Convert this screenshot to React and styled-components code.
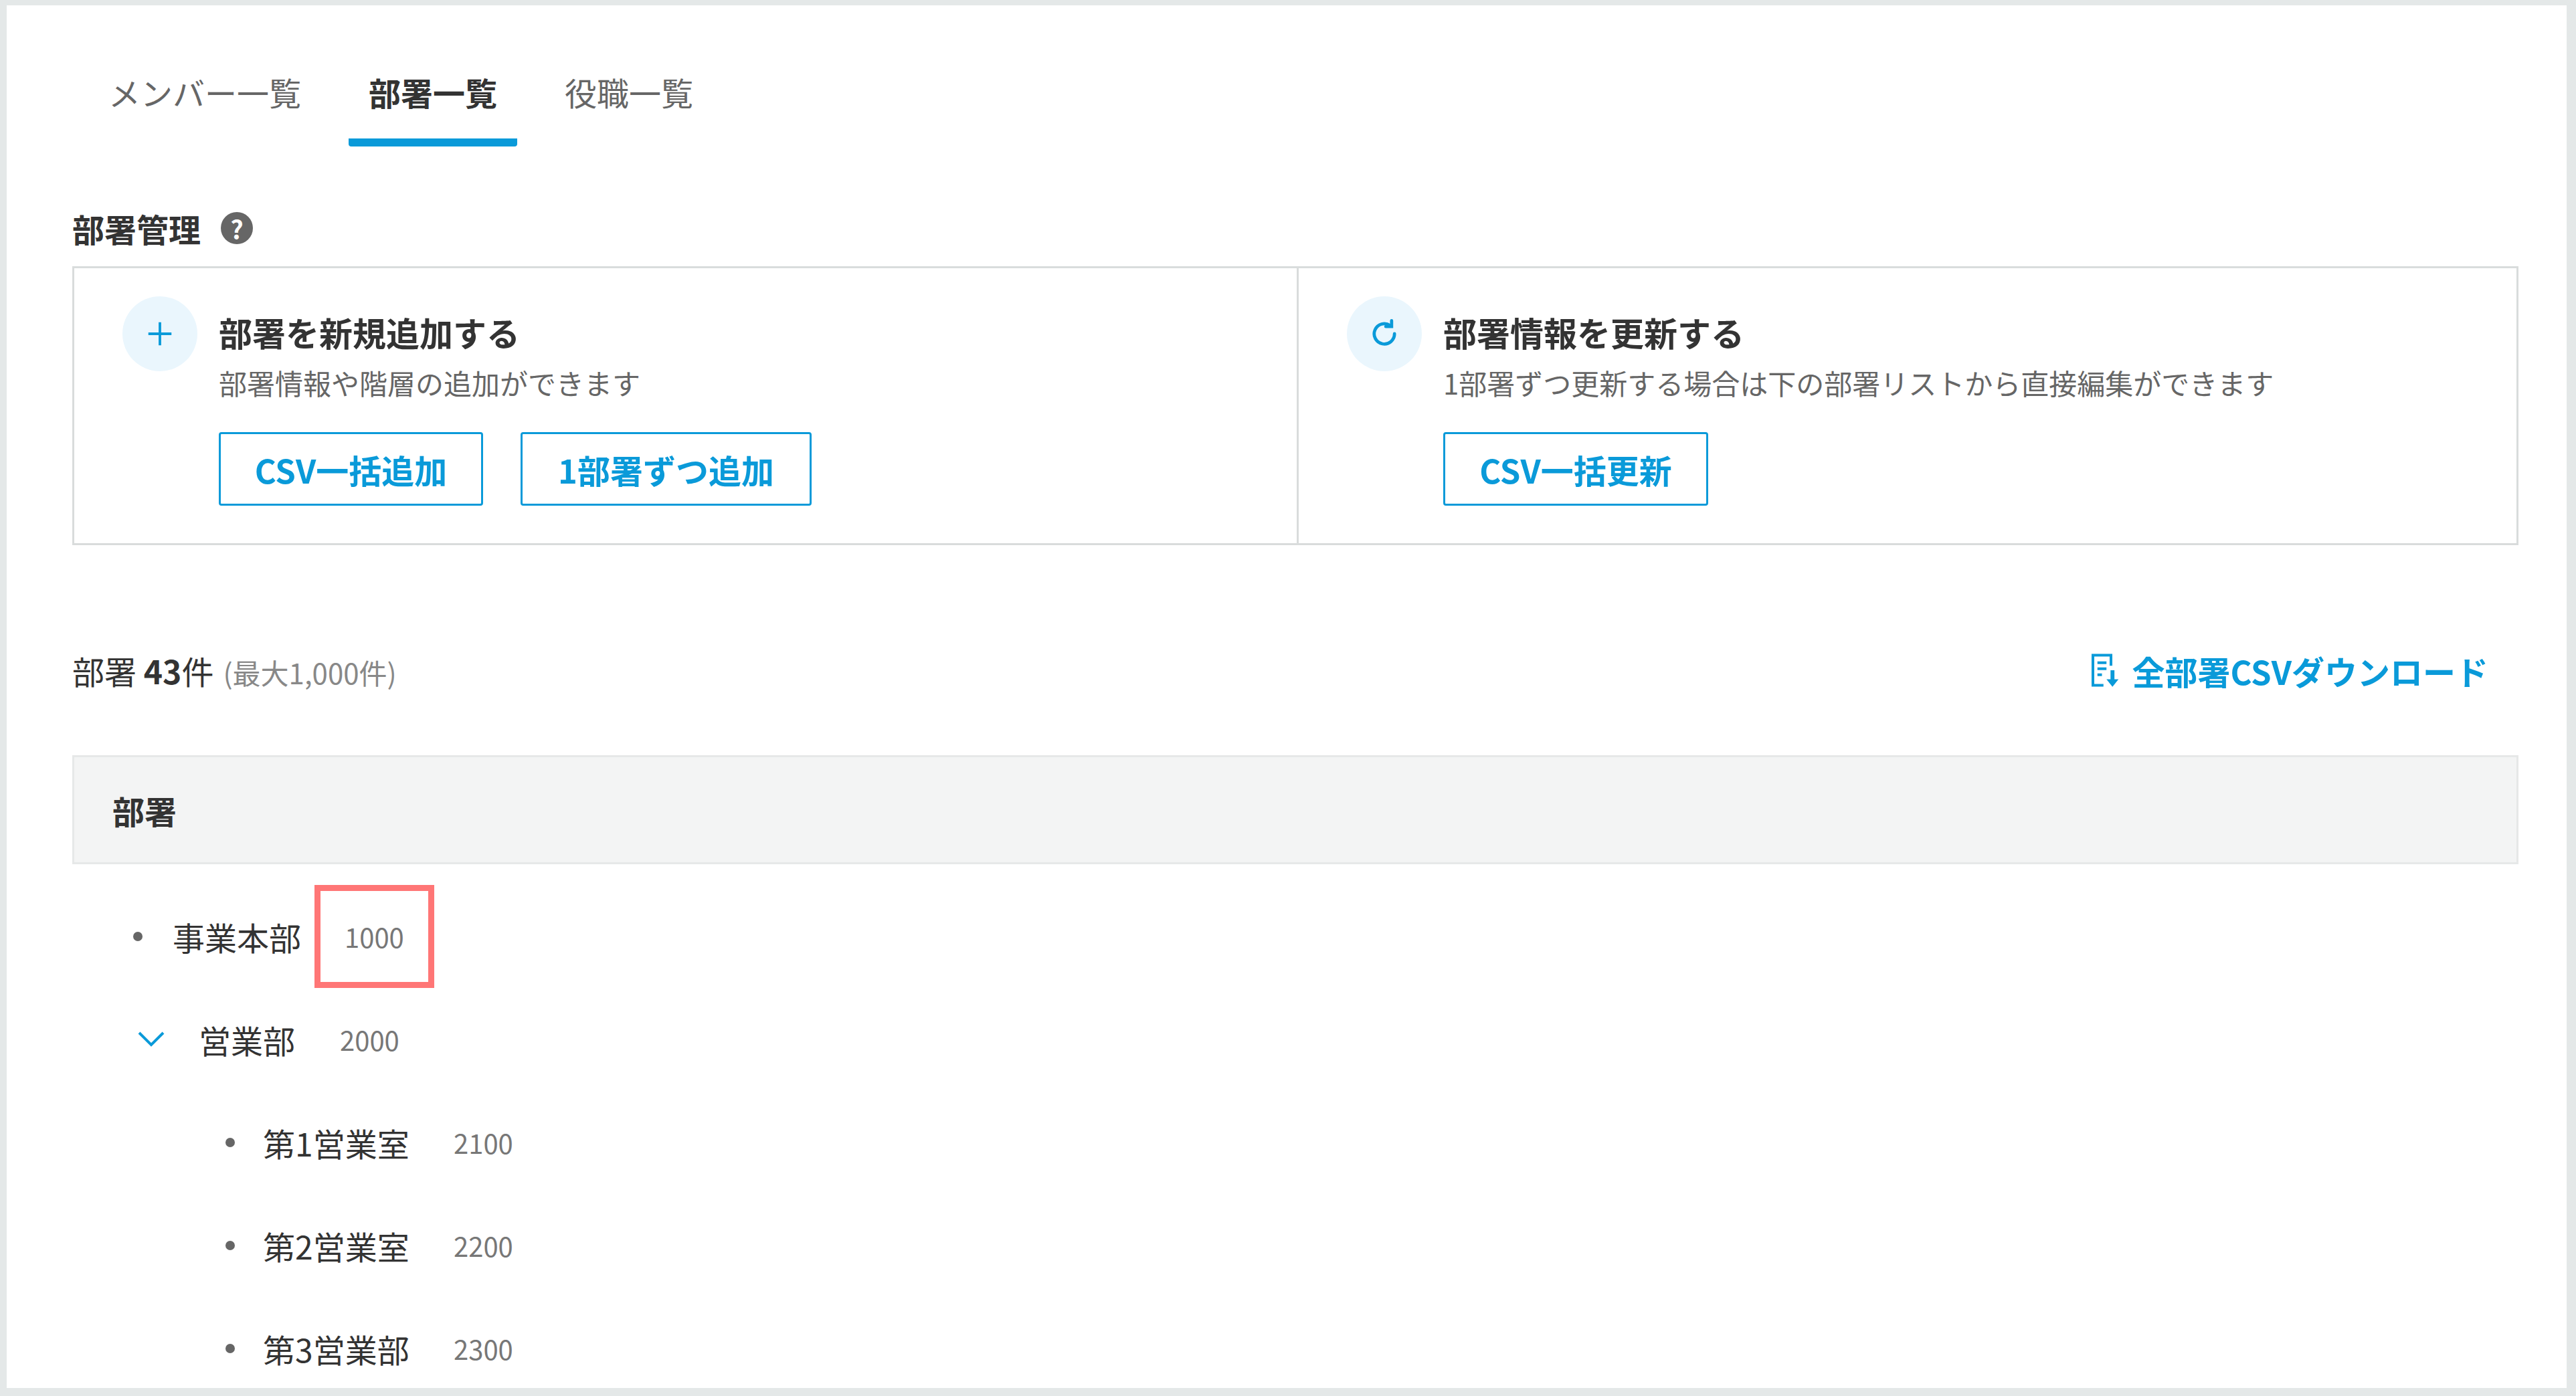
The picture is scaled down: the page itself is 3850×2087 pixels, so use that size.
import React from "react";
import styled, { createGlobalStyle } from "styled-components";

const G = createGlobalStyle`
  html,body{margin:0;padding:0;background:#e4e8e8;}
  body{font-family:"Noto Sans CJK JP","Noto Sans",sans-serif;color:#333;}
`;
const blue = "#0a9ad9";

const Frame = styled.div`
  box-sizing:border-box;width:3850px;height:2087px;padding:8px 14px 12px 10px;
`;
const Panel = styled.div`
  background:#fff;height:100%;box-sizing:border-box;padding:0 72px 0 98px;overflow:hidden;
`;
const Tabs = styled.div`display:flex;gap:41px;padding-left:24px;`;
const Tab = styled.div`
  font-size:48px;line-height:1;padding:105px 30px 46px;
  color:${p=>p.active?"#333":"#666"};font-weight:${p=>p.active?700:400};
  border-bottom:12px solid ${p=>p.active?blue:"transparent"};border-radius:0 0 4px 4px;
`;
const SecTitle = styled.div`
  display:flex;align-items:center;gap:30px;font-size:48px;font-weight:700;margin-top:92px;height:60px;
`;
const Help = styled.span`
  width:48px;height:48px;border-radius:50%;background:#666;color:#fff;font-size:38px;
  display:inline-flex;align-items:center;justify-content:center;font-weight:700;
`;
const Card = styled.div`
  display:grid;grid-template-columns:1827px 1fr;border:3px solid #d9dcdc;margin-top:27px;height:417px;box-sizing:border-box;
`;
const Half = styled.div`
  display:flex;gap:32px;padding:42px 0 0 72px;
  ${p=>p.divider&&"border-left:3px solid #d9dcdc;"}
`;
const Circle = styled.div`
  width:112px;height:112px;border-radius:50%;background:#eaf6fd;flex:none;
  display:flex;align-items:center;justify-content:center;
`;
const Body = styled.div`display:flex;flex-direction:column;`;
const CTitle = styled.div`font-size:50px;font-weight:700;margin-top:23px;line-height:1.2;`;
const CSub = styled.div`font-size:42px;color:#666;margin-top:21px;line-height:1.2;`;
const Btns = styled.div`display:flex;gap:56px;margin-top:49px;`;
const Btn = styled.button`
  height:110px;width:${p=>p.w}px;border:3px solid ${blue};border-radius:4px;background:#fff;
  color:${blue};font-family:inherit;font-weight:700;font-size:49px;padding:0;
`;
const CountRow = styled.div`
  display:flex;justify-content:space-between;align-items:center;margin-top:147px;padding-right:45px;height:80px;
`;
const Count = styled.div`font-size:48px;& small{font-size:42px;color:#888;margin-left:14px;}`;
const DL = styled.div`display:flex;align-items:center;gap:16px;color:${blue};font-weight:700;font-size:49px;`;
const Head = styled.div`
  margin-top:87px;height:163px;background:#f3f4f4;border:3px solid #e6e8e8;box-sizing:border-box;
  display:flex;align-items:center;padding-left:57px;font-size:48px;font-weight:700;
`;
const List = styled.div`padding-top:31px;`;
const Row = styled.div`
  display:flex;align-items:center;height:154px;padding-left:${p=>p.indent}px;
`;
const Marker = styled.div`width:${p=>p.w}px;flex:none;display:flex;align-items:center;`;
const Dot = styled.span`width:14px;height:14px;border-radius:50%;background:#666;`;
const Name = styled.div`font-size:48px;color:#333;width:${p=>p.w}px;flex:none;`;
const Code = styled.div`
  font-size:40px;line-height:1.2;color:#777;
  ${p=>p.hl&&"border:9px solid #ff7676;padding:44px 36px;margin-left:-45px;"}
`;

const Plus = () => (
  <svg width="46" height="46" viewBox="0 0 24 24"><path d="M12 3v18M3 12h18" stroke={blue} strokeWidth="2"/></svg>
);
const Refresh = () => (
  <svg width="52" height="52" viewBox="0 0 24 24" fill="none" stroke={blue} strokeWidth="2.2" strokeLinecap="round">
    <path d="M19 12a7 7 0 1 1-3-5.7"/><path d="M17 3v4h-4" />
  </svg>
);
const DocDl = () => (
  <svg width="48" height="54" viewBox="0 0 20 24" fill="none" stroke={blue} strokeWidth="1.8">
    <path d="M14 9V2H2v20h7"/><path d="M5 7h6M5 11h6M5 15h3"/>
    <path d="M15 12v7" strokeWidth="2.6"/><path d="M11 18h8l-4 5z" fill={blue} stroke="none"/>
  </svg>
);
const Chevron = () => (
  <svg width="44" height="28" viewBox="0 0 22 14" fill="none" stroke={blue} strokeWidth="2"><path d="M2 2l9 9 9-9"/></svg>
);

export default function App(){
  return (<>
    <G/>
    <Frame><Panel>
      <Tabs>
        <Tab>メンバー一覧</Tab>
        <Tab active>部署一覧</Tab>
        <Tab>役職一覧</Tab>
      </Tabs>
      <SecTitle>部署管理<Help>?</Help></SecTitle>
      <Card>
        <Half>
          <Circle><Plus/></Circle>
          <Body>
            <CTitle>部署を新規追加する</CTitle>
            <CSub>部署情報や階層の追加ができます</CSub>
            <Btns><Btn w={395}>CSV一括追加</Btn><Btn w={435}>1部署ずつ追加</Btn></Btns>
          </Body>
        </Half>
        <Half divider>
          <Circle><Refresh/></Circle>
          <Body>
            <CTitle>部署情報を更新する</CTitle>
            <CSub>1部署ずつ更新する場合は下の部署リストから直接編集ができます</CSub>
            <Btns><Btn w={396}>CSV一括更新</Btn></Btns>
          </Body>
        </Half>
      </Card>
      <CountRow>
        <Count>部署 <b>43</b>件<small>(最大1,000件)</small></Count>
        <DL><DocDl/>全部署CSVダウンロード</DL>
      </CountRow>
      <Head>部署</Head>
      <List>
        <Row indent={91}><Marker w={59}><Dot/></Marker><Name w={257}>事業本部</Name><Code hl>1000</Code></Row>
        <Row indent={96}><Marker w={93}><Chevron/></Marker><Name w={211}>営業部</Name><Code>2000</Code></Row>
        <Row indent={229}><Marker w={56}><Dot/></Marker><Name w={285}>第1営業室</Name><Code>2100</Code></Row>
        <Row indent={229}><Marker w={56}><Dot/></Marker><Name w={285}>第2営業室</Name><Code>2200</Code></Row>
        <Row indent={229}><Marker w={56}><Dot/></Marker><Name w={285}>第3営業部</Name><Code>2300</Code></Row>
      </List>
    </Panel></Frame>
  </>);
}
